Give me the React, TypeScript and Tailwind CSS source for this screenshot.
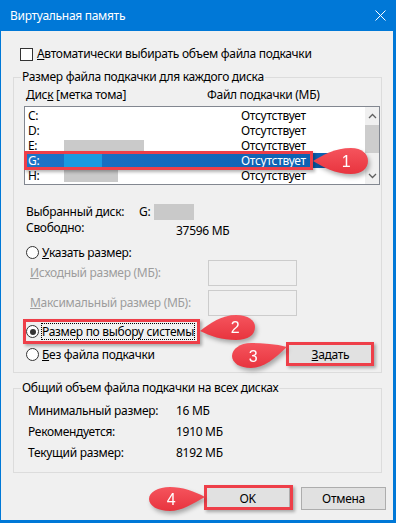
const drives = [
  { id: "C:", block: 0, selected: false },
  { id: "D:", block: 0, selected: false },
  { id: "E:", block: 80, selected: false },
  { id: "G:", block: 38, selected: true },
  { id: "H:", block: 54, selected: false },
];

function Radio({ checked }: { checked?: boolean }) {
  return (
    <span className="flex h-[13px] w-[13px] shrink-0 items-center justify-center rounded-full border border-[#333333] bg-white">
      {checked && <span className="h-[6px] w-[6px] rounded-full bg-[#333333]" />}
    </span>
  );
}

function Chevron({ down }: { down?: boolean }) {
  return (
    <svg width="9" height="6" viewBox="0 0 9 6" className={down ? "rotate-180" : ""}>
      <path d="M1 5 L4.5 1.5 L8 5" fill="none" stroke="#606060" strokeWidth="1.3" />
    </svg>
  );
}

function Bubble({ d, n, tx, ty, w, h, className }: { d: string; n: string; tx: number; ty: number; w: number; h: number; className: string }) {
  return (
    <svg width={w} height={h} viewBox={`0 0 ${w} ${h}`} className={`absolute drop-shadow-[2px_3px_2px_rgba(0,0,0,0.3)] ${className}`}>
      <defs>
        <linearGradient id={`g${n}`} x1="0" y1="0" x2="0" y2="1">
          <stop offset="0" stopColor="#f5545d" />
          <stop offset="1" stopColor="#e8343e" />
        </linearGradient>
      </defs>
      <path d={d} fill={`url(#g${n})`} />
      <text x={tx} y={ty} textAnchor="middle" className="fill-white text-[16px] font-['Liberation_Sans',sans-serif]">
        {n}
      </text>
    </svg>
  );
}

function RedBox({ className }: { className: string }) {
  return <div className={`absolute border-[3px] border-[#ee3f49] shadow-[2px_2px_3px_rgba(0,0,0,0.3)] ${className}`} />;
}

export default function App() {
  return (
    <div className="relative flex h-[523px] w-[396px] flex-col border-b-[3px] border-l border-r-[3px] border-[#0078d7] bg-[#f0f0f0] font-['Noto_Sans',sans-serif] text-[12px] leading-[16px] tracking-[-0.3px] text-black">
      {/* title bar */}
      <div className="flex h-[31px] shrink-0 items-center justify-between bg-[#0078d7] pl-[9px] text-white">
        <span>Виртуальная память</span>
        <svg width="11" height="11" viewBox="0 0 11 11" className="mr-[7px]">
          <path d="M0.5 0.5 L10.5 10.5 M10.5 0.5 L0.5 10.5" stroke="white" strokeWidth="1" />
        </svg>
      </div>

      <label className="ml-[19px] mt-[15px] flex h-[16px] items-center gap-[4px]">
        <span className="h-[13px] w-[13px] border border-[#333333] bg-white" />
        <span>
          <span className="underline">А</span>втоматически выбирать объем файла подкачки
        </span>
      </label>

      <fieldset className="ml-[12px] mt-[7px] h-[304px] w-[369px] shrink-0 border border-[#dcdcdc]">
        <legend className="ml-[7px] px-[1px]">Размер файла подкачки для каждого диска</legend>

        <div className="mt-[2px] flex h-[16px] pl-[12px]">
          <span className="w-[181px]">
            Дис<span className="underline">к</span> [метка тома]
          </span>
          <span>Файл подкачки (МБ)</span>
        </div>

        <div className="ml-[10px] mt-[3px] flex h-[79px] w-[356px] border border-[#828790] bg-white">
          <div className="flex flex-1 flex-col pt-[1px]">
            {drives.map((d) => (
              <div
                key={d.id}
                className={`flex h-[15px] items-center leading-[15px] ${d.selected ? "bg-gradient-to-r from-[#1c74c8] to-[#0a5eae] text-white" : ""}`}
              >
                <span className="flex w-[216px] items-center pl-[3px]">
                  <span className="w-[36px]">{d.id}</span>
                  {d.block > 0 && (
                    <span
                      className={d.selected ? "h-[14px] bg-[#1a9ae0]" : "h-[12px] bg-[#cacaca]"}
                      style={{ width: d.block }}
                    />
                  )}
                </span>
                <span>Отсутствует</span>
              </div>
            ))}
          </div>
          <div className="flex w-[14px] flex-col items-center bg-[#f0f0f0]">
            <div className="flex h-[17px] items-center justify-center">
              <Chevron />
            </div>
            <div className="mt-[1px] h-[28px] w-full bg-[#cdcdcd]" />
            <div className="flex-1" />
            <div className="flex h-[17px] items-center justify-center">
              <Chevron down />
            </div>
          </div>
        </div>

        <div className="mt-[19px] flex h-[16px] items-center pl-[12px]">
          <span className="w-[113px]">Выбранный диск:</span>
          <span className="w-[15px]">G:</span>
          <span className="h-[16px] w-[40px] bg-[#c9c9c9]" />
        </div>
        <div className="flex h-[19px] items-start pl-[12px]">
          <span className="w-[150px]">Свободно:</span>
          <span className="mt-[3px]">37596 МБ</span>
        </div>

        <div className="mt-[6px] flex h-[15px] items-center gap-[3px] pl-[12px]">
          <Radio />
          <span>
            <span className="underline">У</span>казать размер:
          </span>
        </div>
        <div className="flex h-[26px] items-center pl-[16px] text-[#9d9d9d]">
          <span className="w-[178px]">
            <span className="underline">И</span>сходный размер (МБ):
          </span>
          <span className="h-[26px] w-[89px] border border-[#cccccc] bg-[#f0f0f0]" />
        </div>
        <div className="mt-[4px] flex h-[26px] items-center pl-[16px] text-[#9d9d9d]">
          <span className="w-[178px]">
            <span className="underline">М</span>аксимальный размер (МБ):
          </span>
          <span className="h-[26px] w-[89px] border border-[#cccccc] bg-[#f0f0f0]" />
        </div>

        <div className="mt-[7px] flex h-[17px] items-center pl-[12px]">
          <Radio checked />
          <span className="ml-[2px] h-[17px] border border-dotted border-black leading-[15px]">Размер по выбору системы</span>
        </div>

        <div className="mt-[3px] flex h-[23px] items-center justify-between pl-[12px] pr-[8px]">
          <div className="flex items-center gap-[3px]">
            <Radio />
            <span>
              <span className="underline">Б</span>ез файла подкачки
            </span>
          </div>
          <button className="h-[23px] w-[85px] border border-[#adadad] bg-[#e1e1e1]">
            <span className="underline">З</span>адать
          </button>
        </div>
      </fieldset>

      <fieldset className="ml-[12px] mt-[7px] h-[93px] w-[369px] shrink-0 border border-[#dcdcdc]">
        <legend className="ml-[7px] px-[1px]">Общий объем файла подкачки на всех дисках</legend>
        <div className="mt-[4px] flex flex-col pl-[14px]">
          {[
            ["Минимальный размер:", "16 МБ"],
            ["Рекомендуется:", "1910 МБ"],
            ["Текущий размер:", "8192 МБ"],
          ].map(([k, v]) => (
            <div key={k} className="flex h-[21px] items-center">
              <span className="w-[148px]">{k}</span>
              <span>{v}</span>
            </div>
          ))}
        </div>
      </fieldset>

      <div className="mt-[14px] flex justify-end gap-[11px] pr-[7px]">
        <button className="h-[23px] w-[85px] border border-[#adadad] bg-[#e1e1e1]">OK</button>
        <button className="h-[23px] w-[85px] border border-[#adadad] bg-[#e1e1e1]">Отмена</button>
      </div>

      {/* annotations */}
      <RedBox className="left-[23px] top-[151px] h-[19px] w-[289px]" />
      <Bubble
        n="1"
        w={56}
        h={28}
        tx={33}
        ty={20}
        d="M0,14 C10,8 22,1 38,1 C49,1 55,7 55,14 C55,21 49,27 38,27 C22,27 10,20 0,14 Z"
        className="left-[312px] top-[147px]"
      />
      <RedBox className="left-[22px] top-[319px] h-[25px] w-[177px]" />
      <Bubble
        n="2"
        w={56}
        h={28}
        tx={35}
        ty={19}
        d="M0,17 C10,9 22,1 36,1 C48,1 55,6 55,13 C55,21 48,26 36,26 C22,26 10,22 0,17 Z"
        className="left-[199px] top-[314px]"
      />
      <RedBox className="left-[285px] top-[342px] h-[24px] w-[88px]" />
      <Bubble
        n="3"
        w={57}
        h={27}
        tx={23}
        ty={20}
        d="M57,5 C46,2 33,1 21,1 C10,1 2,7 2,14 C2,21 10,26 21,26 C34,26 45,16 57,5 Z"
        className="left-[229px] top-[342px]"
      />
      <RedBox className="left-[203px] top-[485px] h-[25px] w-[89px]" />
      <Bubble
        n="4"
        w={57}
        h={26}
        tx={23}
        ty={19}
        d="M57,11 C46,5 34,1 22,1 C10,1 1,6 1,13 C1,20 10,25 22,25 C34,25 46,17 57,11 Z"
        className="left-[147px] top-[486px]"
      />
    </div>
  );
}
